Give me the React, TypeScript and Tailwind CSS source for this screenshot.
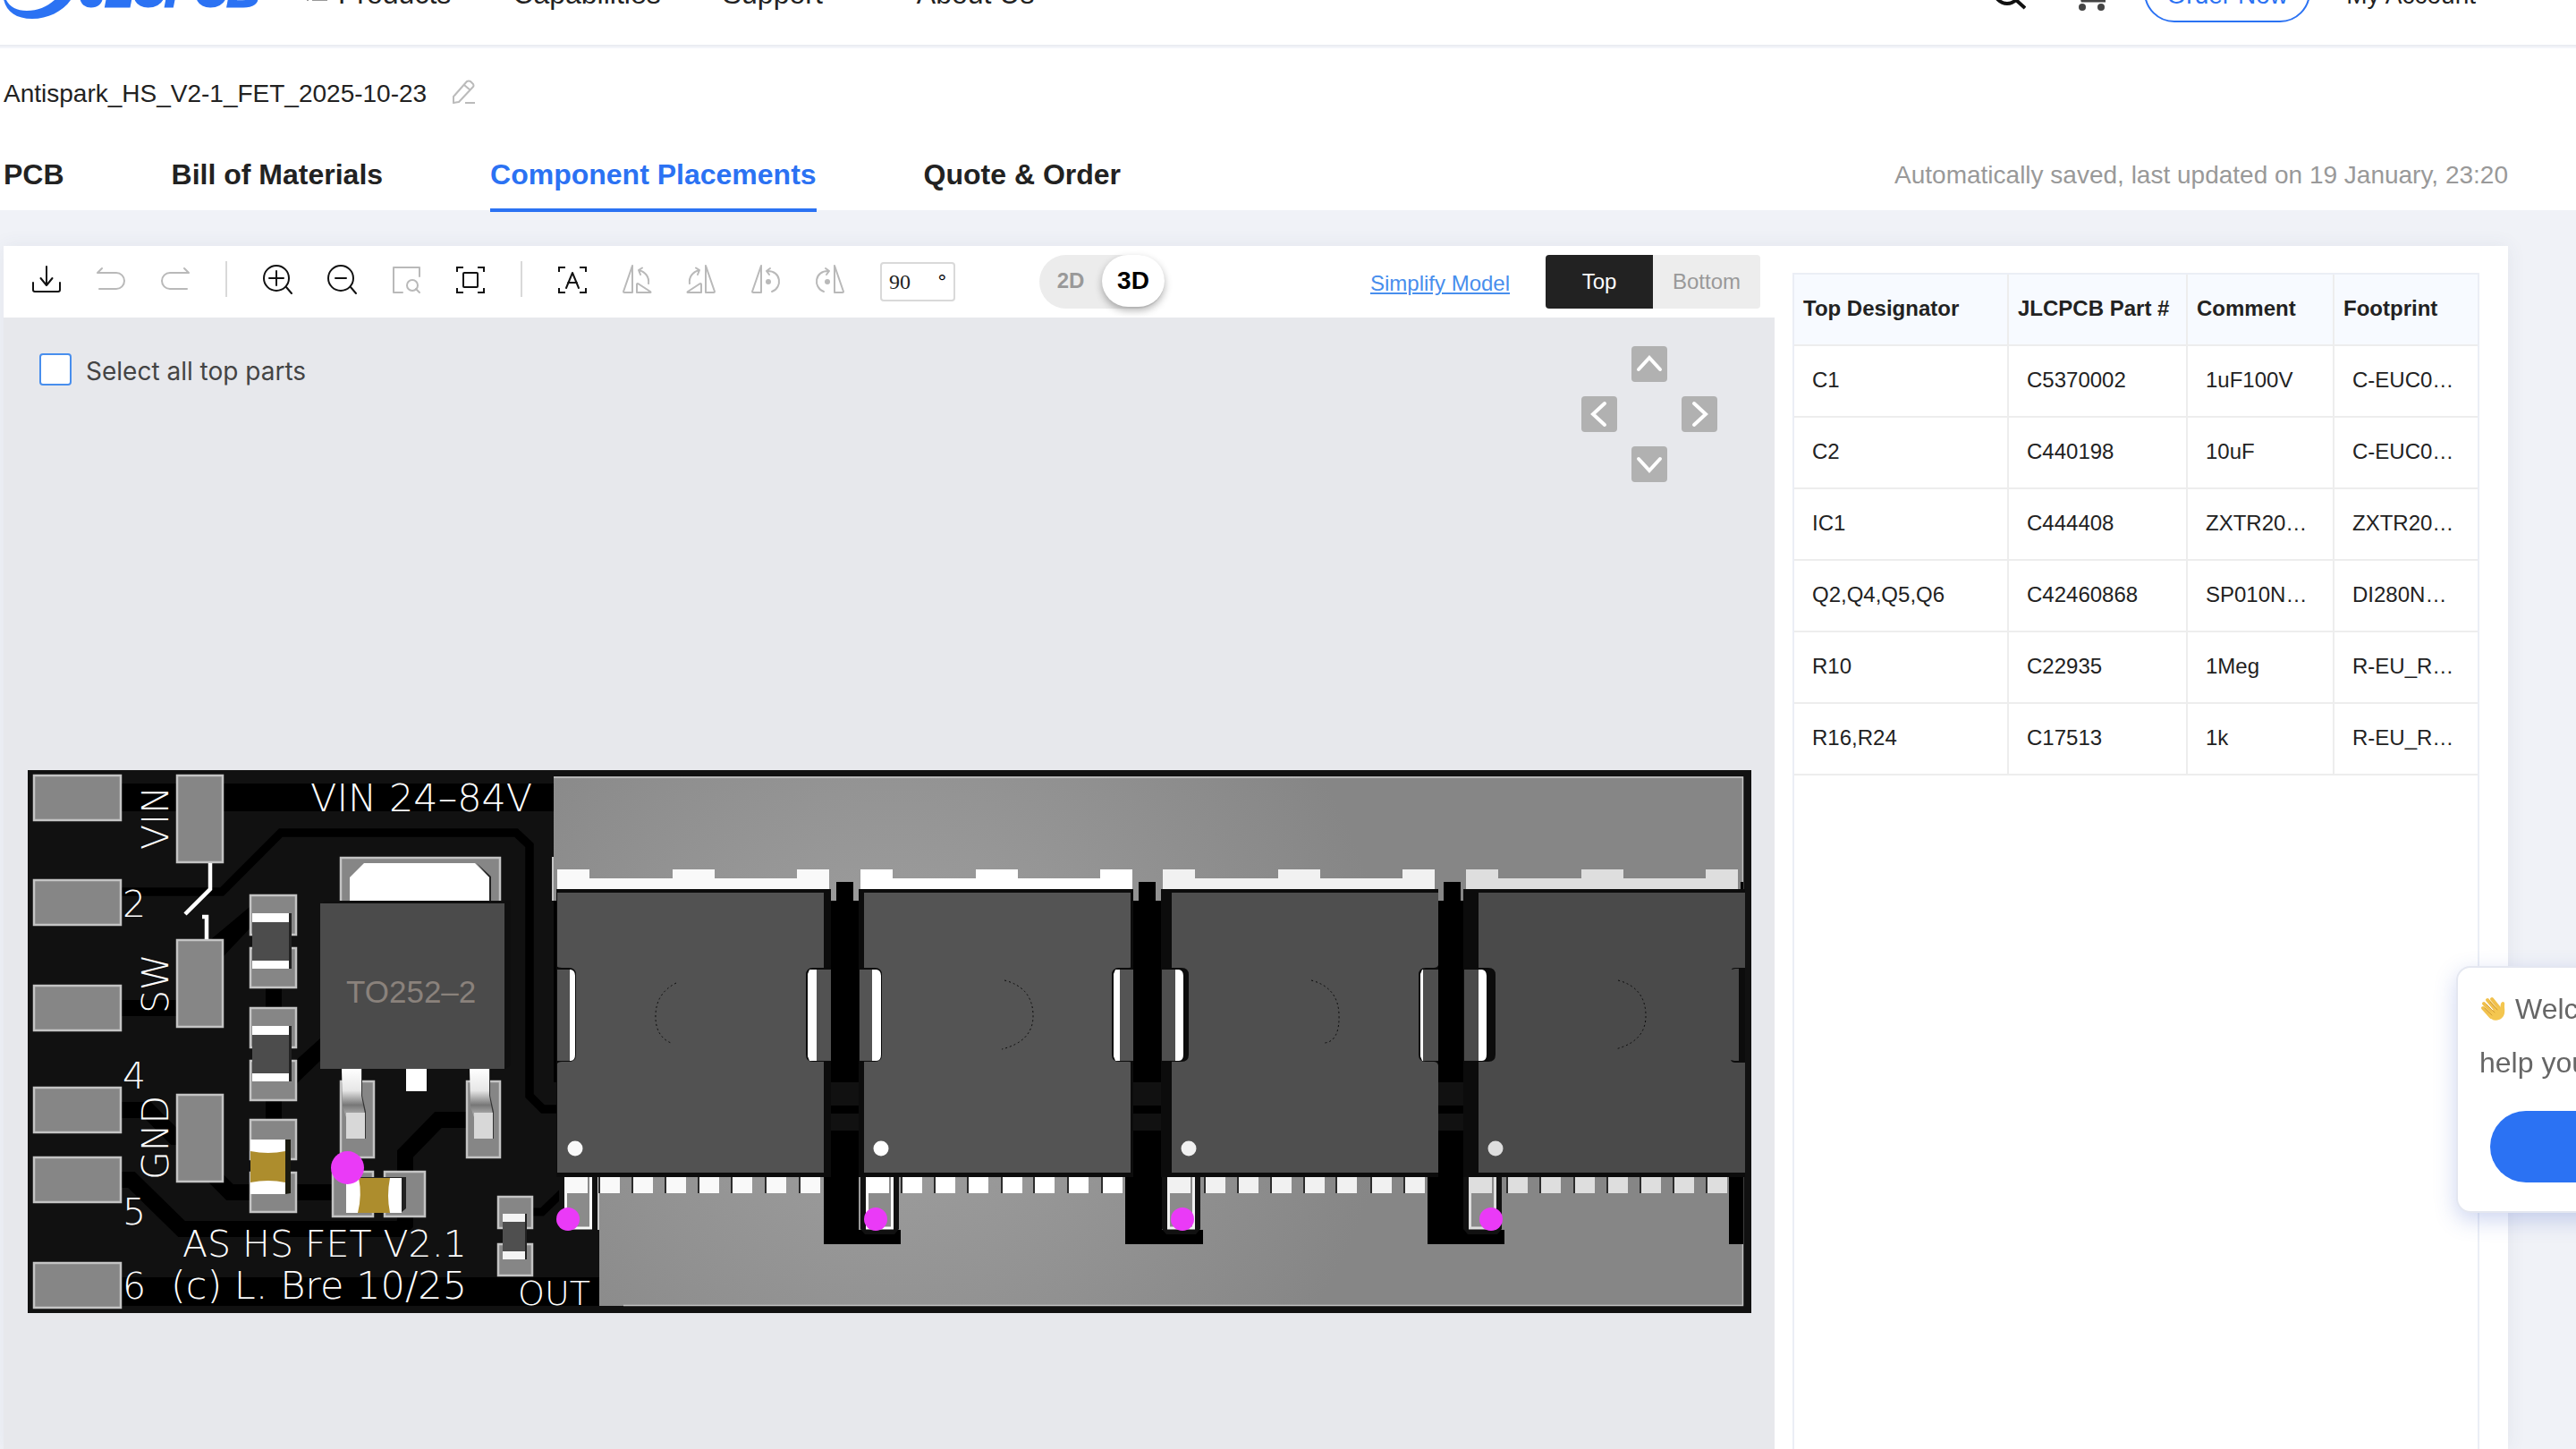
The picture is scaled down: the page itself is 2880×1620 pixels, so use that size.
import type { ReactNode } from "react";
import { useState } from "react";
import clsx from "clsx";

const TABS = ["PCB", "Bill of Materials", "Component Placements", "Quote & Order"];

const PARTS = [
    { designator: "C1", part: "C5370002", comment: "1uF100V", footprint: "C-EUC0…" },
    { designator: "C2", part: "C440198", comment: "10uF", footprint: "C-EUC0…" },
    { designator: "IC1", part: "C444408", comment: "ZXTR20…", footprint: "ZXTR20…" },
    { designator: "Q2,Q4,Q5,Q6", part: "C42460868", comment: "SP010N…", footprint: "DI280N…" },
    { designator: "R10", part: "C22935", comment: "1Meg", footprint: "R-EU_R…" },
    { designator: "R16,R24", part: "C17513", comment: "1k", footprint: "R-EU_R…" },
];

function Logo() {
    return (
        <svg viewBox="0 0 300 80" className="h-20 w-[300px] shrink-0" aria-label="JLCPCB">
            <path d="M4 48C4 20 30 2 58 6c22 4 30 22 21 43C70 62 53 70 36 70 18 70 7 62 4 48Zm3 1c4 8 12 12 23 12 12 0 22-4 31-12 9-10 12-24 2-32C40 8 8 24 7 49Z" fill="#2b72f3" fillRule="evenodd" />
            <text x="90" y="56" fontSize="50" fontWeight="700" fontStyle="italic" fill="#2b72f3" stroke="#2b72f3" strokeWidth="3">JLCPCB</text>
        </svg>
    );
}

function Header() {
    return (
        <header className="-mt-[68px] flex h-[120px] items-center justify-between border-b-2 border-[#ebedf2] bg-white pr-[112px] text-[#222]">
            <div className="flex items-center">
                <Logo />
                <svg viewBox="0 0 24 20" className="ml-[42px] h-5 w-6 shrink-0" fill="none" stroke="#999" strokeWidth="2">
                    <path d="M1 1h2M7 1h17M1 10h2M7 10h17M1 19h2M7 19h17" />
                </svg>
                <nav className="ml-3 flex gap-[69px] pt-1 text-[32px] leading-10 whitespace-nowrap">
                    <a href="#products">Products</a>
                    <a href="#capabilities">Capabilities</a>
                    <a href="#support">Support</a>
                    <a href="#about" className="ml-9">About Us</a>
                </nav>
            </div>
            <div className="flex items-center text-[28px] leading-10 whitespace-nowrap">
                <button aria-label="Search">
                    <svg viewBox="0 0 40 40" className="size-10" fill="none" stroke="#111" strokeWidth="4">
                        <circle cx="19" cy="19" r="14" />
                        <path d="m29 29 10 9" />
                    </svg>
                </button>
                <button aria-label="Cart" className="ml-[48px]">
                    <svg viewBox="0 0 44 44" className="size-11" fill="none" stroke="#444" strokeWidth="3">
                        <path d="M2 8h7l6 24h26M12 14h30l-4 14H14" />
                        <circle cx="15" cy="39" r="4" fill="#444" stroke="none" />
                        <circle cx="36" cy="39" r="4" fill="#444" stroke="none" />
                    </svg>
                </button>
                <button className="ml-10 h-[68px] w-[186px] rounded-full border-2 border-[#2b72f3] pt-2 text-[#2b72f3]">Order Now</button>
                <a href="#account" className="ml-10 pt-2">My Account</a>
            </div>
        </header>
    );
}

function ToolButton({ label, off = false, flip = false, children }: { label: string; off?: boolean; flip?: boolean; children: ReactNode }) {
    return (
        <button aria-label={label} disabled={off} className="shrink-0 pb-1.5">
            <svg
                viewBox="0 0 32 32"
                className={clsx("size-8 overflow-visible", off ? "text-[#b9b9b9]" : "text-[#111]", flip && "-scale-x-100")}
                fill="none"
                stroke="currentColor"
                strokeWidth="2"
                strokeLinecap="round"
                strokeLinejoin="round"
            >
                {children}
            </svg>
        </button>
    );
}

const Corners = () => <path d="M1 8V3h7M24 3h7v5M31 26v5h-7M8 31H1v-5" strokeLinecap="butt" strokeLinejoin="miter" />;
const UndoPath = () => <path d="M6 4 1 9h21a9 9 0 0 1 0 18H3" />;
const RotateCorner = () => (
    <>
        <path d="M11 1v30H2q-1 0-1-1ZM16 22v9h15q1 0 0-1L18 21.500q-2-1-2 .5Z" />
        <path d="M29 21c1-7-3-13-11-15M22 3.500 18 6l2 5" />
    </>
);
const RotateCenter = () => (
    <>
        <path d="M11 1v30H2q-1 0-1-1ZM17 7c17-1 18 19 6 23M21 4l-4 3 3 4" />
        <circle cx="19" cy="19" r="3" fill="currentColor" stroke="none" />
    </>
);
const Divider = () => <div className="mb-1.5 h-10 w-[2px] shrink-0 bg-[#d9d9d9]" />;

function Toolbar() {
    const [side, setSide] = useState("Top");
    return (
        <div className="flex h-20 items-center justify-between pr-4 pl-8">
            <div className="flex items-center">
                <div className="flex items-center gap-10">
                    <ToolButton label="Download">
                        <path d="M16 2v21M9.500 15l6.500 8 6.500-8M1 20v8q0 2 2 2h26q2 0 2-2v-8" />
                    </ToolButton>
                    <ToolButton label="Undo" off><UndoPath /></ToolButton>
                    <ToolButton label="Redo" off flip><UndoPath /></ToolButton>
                    <Divider />
                    <ToolButton label="Zoom in">
                        <circle cx="15" cy="15" r="14" />
                        <path d="M15 7v16M7 15h16M26 25l6 7" />
                    </ToolButton>
                    <ToolButton label="Zoom out">
                        <circle cx="15" cy="15" r="14" />
                        <path d="M9 15h12M26 25l6 7" />
                    </ToolButton>
                    <ToolButton label="Zoom to area" off>
                        <path d="M31 13V3H2v28h10M27 27l4 4" />
                        <circle cx="23" cy="23" r="6" />
                    </ToolButton>
                    <ToolButton label="Fit to screen">
                        <Corners />
                        <rect x="8" y="9" width="16" height="16" rx="1" />
                    </ToolButton>
                    <Divider />
                    <ToolButton label="Show designators">
                        <Corners />
                        <path d="m9 26 7-17 7 17M11 20h10" />
                    </ToolButton>
                    <ToolButton label="Rotate left" off><RotateCorner /></ToolButton>
                    <ToolButton label="Rotate right" off flip><RotateCorner /></ToolButton>
                    <ToolButton label="Rotate group left" off><RotateCenter /></ToolButton>
                    <ToolButton label="Rotate group right" off flip><RotateCenter /></ToolButton>
                    <label className="flex h-11 w-[84px] items-center justify-between rounded border-2 border-[#d9d9d9] pr-2 pl-2 text-2xl">
                        <input aria-label="Rotation angle" defaultValue="90" className="w-10 font-['Liberation_Serif',serif] text-[#222] outline-none" />
                        <span>°</span>
                    </label>
                </div>
                <div className="ml-[94px] flex h-[60px] w-[140px] rounded-full bg-[#ececec] font-bold">
                    <button className="h-[58px] w-[70px] text-2xl text-[#999]">2D</button>
                    <button className="h-[58px] w-[70px] rounded-full bg-white text-[28px] text-black shadow-[0_4px_8px_rgba(0,0,0,0.3)]">3D</button>
                </div>
            </div>
            <div className="flex items-center gap-10 text-2xl">
                <a href="#simplify" className="pt-1 text-[#488eed] underline">Simplify Model</a>
                <div className="flex overflow-hidden rounded">
                    {["Top", "Bottom"].map((name) => (
                        <button
                            key={name}
                            onClick={() => setSide(name)}
                            className={clsx("h-[60px] w-[120px]", side === name ? "bg-[#222] text-white" : "bg-[#ededed] text-[#999]")}
                        >
                            {name}
                        </button>
                    ))}
                </div>
            </div>
        </div>
    );
}

function PanButton({ label, d, className }: { label: string; d: string; className: string }) {
    return (
        <button aria-label={label} className={clsx("size-10 rounded bg-[#b1b1b1]", className)}>
            <svg viewBox="0 0 40 40" className="size-10" fill="none" stroke="#fff" strokeWidth="4" strokeLinecap="round">
                <path d={d} />
            </svg>
        </button>
    );
}

const Pad = ({ x, y, w, h }: { x: number; y: number; w: number; h: number }) => (
    <rect x={x + 1} y={y + 1} width={w - 2} height={h - 2} fill="#868686" stroke="#c4c4c4" strokeWidth="2.500" />
);

const Resistor = ({ y }: { y: number }) => (
    <g>
        <Pad x={279} y={y} w={53} h={46} />
        <Pad x={279} y={y + 59} w={53} h={46} />
        <rect x="282" y={y + 21} width="44" height="62" fill="#222" />
        <rect x="282" y={y + 21} width="41" height="62" fill="#fff" />
        <rect x="282" y={y + 31} width="41" height="43" fill="#4c4c4c" />
    </g>
);

const Leg = ({ x }: { x: number }) => (
    <g>
        <path d={`M${x + 20} 1195h3v30l4 18v30h-4z`} fill="#333" />
        <path d={`M${x} 1195h22v30l4 20v4h-21l-4-12z`} fill="url(#leg)" />
        <rect x={x + 5} y="1244" width="21" height="29" fill="#d8d8d8" />
    </g>
);

interface Fet {
    tab: number;
    edge: [number, number];
    face: [number, number];
    notchL: [number, number, number];
    notchR: [number, number] | null;
    dot: number;
    pad: number;
    leads: number[];
    pin: number;
    arc: string;
    metal: string;
    body: string;
}

const FETS: Fet[] = [
    { tab: 623, edge: [622, 929], face: [623, 921], notchL: [637, 643, 644], notchR: [903, 913], dot: 643, pad: 631, leads: [633, 671, 708, 745, 782, 819, 857, 895], pin: 635, arc: "M756 1099Q734 1110 733 1134T750 1166", metal: "#f9f9f9", body: "#525252" },
    { tab: 962, edge: [960, 1267], face: [966, 1264], notchL: [975, 985, 986], notchR: [1245, 1252], dot: 985, pad: 968, leads: [970, 1009, 1046, 1083, 1121, 1157, 1195, 1233], pin: 979, arc: "M1123 1096Q1154 1104 1155 1134T1120 1173", metal: "#fff", body: "#545454" },
    { tab: 1300, edge: [1298, 1608], face: [1310, 1608], notchL: [1314, 1323, 1329], notchR: [1588, 1591], dot: 1329, pad: 1305, leads: [1310, 1348, 1385, 1422, 1459, 1495, 1534, 1571], pin: 1322, arc: "M1466 1096Q1496 1104 1497 1134T1481 1166", metal: "#f1f1f1", body: "#4f4f4f" },
    { tab: 1639, edge: [1636, 1951], face: [1653, 1951], notchL: [1653, 1662, 1672], notchR: null, dot: 1672, pad: 1642, leads: [1647, 1686, 1723, 1761, 1798, 1835, 1872, 1909], pin: 1667, arc: "M1809 1096Q1839 1104 1840 1134T1806 1173", metal: "#dedede", body: "#4a4a4a" },
];

// black channels between neighbouring transistors: [left, right, lower left, lower right]
const CHANNELS = [
    [929, 960, 921, 1007],
    [1267, 1299, 1258, 1345],
    [1608, 1637, 1596, 1682],
];

function Transistor({ fet }: { fet: Fet }) {
    const { tab, edge, face, notchL, notchR, pad, metal, body } = fet;
    return (
        <g>
            <path d={`M${tab} 995v-23h36v10h93v-10h47v10h92v-10h36v23z`} fill={metal} />
            {fet.leads.map((x, i) => (
                <g key={x}>
                    {i > 0 && <rect x={x - 2} y="1316" width="24" height="18" fill="#2c2c2c" />}
                    {i > 0 && <rect x={x} y="1316" width="22" height="18" fill={metal} />}
                </g>
            ))}
            <path d={`M${pad - 6} 1316h43v58l-5 6h-33l-5-6z`} fill="#111" />
            <rect x={pad + 1.5} y="1310" width="28" height="63" fill="#8b8b8b" stroke={metal} strokeWidth="3" />
            <rect x={pad + 2} y="1316" width="24" height="18" fill={metal} />
            <rect x={edge[0]} y="994" width={edge[1] - edge[0]} height="322" fill="#0c0c0c" />
            <rect x={face[0]} y="998" width={face[1] - face[0]} height="313" fill={body} />
            <path d={`M${edge[0]} 1080q2 2 6 2H${notchL[2] - 8}q8 0 8 8v89q0 8-8 8H${edge[0] + 6}q-4 0-6 3z`} fill="#0c0c0c" />
            <path d={`M${edge[0] + 1} 1084H${notchL[1] - 5}q5 1 5 7v88q0 7-5 7H${edge[0] + 1}z`} fill="#fff" />
            <rect x={edge[0] + 1} y="1084" width={notchL[0] - edge[0] - 1} height="102" fill={body} />
            {notchR ? (
                <>
                    <path d={`M${edge[1]} 1079q-1 3-5 3H${notchR[0] + 6}q-8 0-8 8v89q0 8 8 8H${edge[1] - 5}q4 0 5 4z`} fill="#0c0c0c" />
                    <path d={`M${notchR[1]} 1084v102H${notchR[0] + 2}l-2-5v-92l2-5z`} fill="#fff" />
                    <rect x={notchR[1]} y="1084" width={edge[1] - notchR[1]} height="102" fill={body} />
                </>
            ) : (
                <path d="M1936 1084q0-2 4-2h11v106h-11q-4 0-5-3l4 1h5v-103h-4z" fill="#0c0c0c" />
            )}
            <path d={fet.arc} fill="none" stroke="#0a0a0a" strokeWidth="1" strokeDasharray="2 3" />
            <circle cx={fet.dot} cy="1284" r="8.500" fill={metal} />
            <circle cx={fet.pin} cy="1363" r="13" fill="#ea3af7" />
        </g>
    );
}

// Coordinates are in scene units, the board sits at 31,861
function Board() {
    return (
        <svg viewBox="31 861 1927 607" className="block h-auto w-full" role="img" aria-label="Top side of the board">
            <defs>
                <radialGradient id="copper" gradientUnits="userSpaceOnUse" cx="1000" cy="1160" r="560">
                    <stop offset="0" stopColor="#a2a2a2" />
                    <stop offset="1" stopColor="#868686" />
                </radialGradient>
                <linearGradient id="leg" x1="0" y1="0" x2="0" y2="1">
                    <stop offset="0" stopColor="#fff" />
                    <stop offset="0.450" stopColor="#e6e6e6" />
                    <stop offset="0.750" stopColor="#777" />
                    <stop offset="1" stopColor="#bbb" />
                </linearGradient>
            </defs>
            <rect x="31" y="861" width="1927" height="607" fill="#111" />
            <rect x="619" y="868" width="1330" height="592" fill="url(#copper)" />
            <path d="M619 869H1948.500V1459.500H697" fill="none" stroke="#c4c4c4" strokeWidth="1.500" />
            <path d="M619 1007h51v421h-51z" fill="#111" />

            {/* traces */}
            <g fill="none" stroke="#000">
                <path d="M133 891.500H619" strokeWidth="31" />
                <path d="M133 1444H670" strokeWidth="32" />
                <path d="M136 997H248L314 931H577L592 945V1225L607 1240H624" strokeWidth="9.500" />
                <path d="M136 1127H197M136 1241H165L195 1271H202M240 1316L257 1333H371" strokeWidth="18" />
                <path d="M136 1319H147L203 1374H447L453 1368V1290L490 1252H525M306 1100V1255" strokeWidth="18" />
                <path d="M596 1355H606L634 1328" strokeWidth="9" />
                <path d="M620.500 1007V1210" strokeWidth="3" />
            </g>
            <path d="M236 1050 279 1014h4v20l-33 35zM329 1187l29-26v25l-28 27z" />
            <path d="M618 958V1007" stroke="#c4c4c4" strokeWidth="2" />

            {/* edge pads */}
            {[866, 983, 1101, 1215, 1293, 1411].map((y) => <Pad key={y} x={37} y={y} w={99} h={52} />)}
            {[866, 1050, 1223].map((y) => <Pad key={y} x={197} y={y} w={53} h={99} />)}
            <path d="M235 965V994L207 1022M226 1025H231V1050" fill="none" stroke="#fff" strokeWidth="4.500" />

            <Resistor y={1000} />
            <Resistor y={1126} />

            {/* C1 */}
            <Pad x={279} y={1251} w={53} h={46} />
            <Pad x={279} y={1310} w={53} h={46} />
            <path d="M319 1274h6v60l-6 1z" fill="#1a1a10" />
            <path d="M280 1274h39v61h-39z" fill="#fff" />
            <path d="M280 1287q20 4 39 0v35q-19-4-39 0z" fill="#ad8d2d" />

            {/* C2 */}
            <Pad x={371} y={1309} w={47} h={52} />
            <Pad x={429} y={1309} w={47} h={52} />
            <path d="M400 1316h54v35l-6 5h-48z" fill="#222" />
            <path d="M387 1317h62v39h-62z" fill="#fff" />
            <path d="M401 1317h35q-4 20 0 39h-36q5-20 1-39z" fill="#ad8d2d" />

            {/* IC1 */}
            <Pad x={380} y={958} w={180} h={60} />
            <path d="M547 981v27h2v-28l-16-15z" fill="#222" />
            <path d="M391 1010v-29l16-16h124l16 16v29z" fill="#fff" />
            <path d="M362 1007h209v184l-7 4H358z" fill="#0f0f0f" />
            <rect x="358" y="1010" width="206" height="185" fill="#4b4b4b" />
            <text x="387" y="1121" fontSize="35" fill="#8a827c">TO252–2</text>
            <Pad x={380} y={1208} w={39} h={87} />
            <Pad x={521} y={1208} w={39} h={87} />
            <rect x="454" y="1195" width="23" height="25" fill="#fff" />
            <Leg x={382} />
            <Leg x={525} />
            <circle cx="388.500" cy="1305.500" r="18.500" fill="#ea3af7" />

            {/* R10 */}
            <Pad x={556} y={1337} w={40} h={37} />
            <Pad x={556} y={1390} w={40} h={37} />
            <rect x="562" y="1357" width="27" height="51" fill="#222" />
            <rect x="562" y="1357" width="25" height="51" fill="#f4f4f4" />
            <rect x="562" y="1366" width="25" height="33" fill="#4f4f4f" />

            {CHANNELS.map(([left, right, lowLeft, lowRight]) => (
                <g key={left}>
                    <path d={`M${left} 1007h6v-21h19v21H${right}V1375H${lowRight}V1391H${lowLeft}V1316H${left}z`} />
                    <path d={`M${left} 1210H${right}v26H${left}zM${left} 1245H${right}v19H${left}z`} fill="#111" />
                </g>
            ))}
            <path d="M1933 1316h16v75h-16zM1946 986h3v10h-3z" />
            <path d="M669 1316V1375" stroke="#ccc" strokeWidth="2" />
            {FETS.map((fet) => <Transistor key={fet.tab} fet={fet} />)}

            {/* silkscreen */}
            <g fill="#fff" fontSize="41" fontWeight="200" fontFamily="'DejaVu Sans', sans-serif">
                <text x="347" y="907" fontSize="43">VIN 24–84V</text>
                <text x="204" y="1405">AS HS FET V2.1</text>
                <text x="191" y="1452" fontSize="43">(c) L. Bre 10/25</text>
                <text x="579" y="1459" fontSize="38">OUT</text>
                <text x="137" y="1025">2</text>
                <text x="137" y="1217">4</text>
                <text x="137" y="1369">5</text>
                <text x="137" y="1452">6</text>
                <text transform="translate(188 950) rotate(-90)">VIN</text>
                <text transform="translate(188 1133) rotate(-90)">SW</text>
                <text transform="translate(188 1319) rotate(-90)">GND</text>
            </g>
        </svg>
    );
}

function PartsTable() {
    return (
        <div className="mt-[30px] mr-8 ml-5 flex-1 border-2 border-b-0 border-[#ebeef5]">
            <table className="w-full table-fixed text-left text-2xl text-[#222]">
                <colgroup>
                    <col className="w-[239px]" />
                    <col className="w-[200px]" />
                    <col className="w-[164px]" />
                    <col />
                </colgroup>
                <thead>
                    <tr className="h-[79px] border-b-2 border-[#ededed] bg-[#f7faff]">
                        {["Top Designator", "JLCPCB Part #", "Comment", "Footprint"].map((title) => (
                            <th key={title} className="border-r-2 border-[#ededed] px-[10px] pb-[2px] whitespace-nowrap last:border-r-0">{title}</th>
                        ))}
                    </tr>
                </thead>
                <tbody>
                    {PARTS.map((row) => (
                        <tr key={row.designator} className="h-20 border-b-2 border-[#ededed]">
                            {[row.designator, row.part, row.comment, row.footprint].map((cell, idx) => (
                                <td key={idx} className="border-r-2 border-[#ededed] pb-[2px] pl-5 whitespace-nowrap last:border-r-0">{cell}</td>
                            ))}
                        </tr>
                    ))}
                </tbody>
            </table>
        </div>
    );
}

function ChatBubble() {
    return (
        <div className="fixed top-[1080px] -right-[266px] w-[400px] rounded-2xl border-2 border-[#e4e7f0] bg-white pt-4 pb-8 shadow-[0_8px_24px_rgba(60,90,200,0.25)]">
            <div className="pl-6 text-[32px] leading-[60px] whitespace-nowrap text-[#666]">
                <p className="flex items-center gap-[10px]">
                    <svg viewBox="0 0 30 30" className="size-[30px]" aria-label="Waving hand">
                        <path d="M4 14 13 24M5 9l10 11M9 5l10 12M14 4l8 10" stroke="#f0c04c" strokeWidth="4" strokeLinecap="round" />
                        <path d="M20 12 23 15c1-3 0-7 3-8 3 0 2 3 2 6 1 8-1 12-6 14-5 2-9 0-13-5z" fill="#f4c64f" />
                        <path d="M6 14l8 8M8 10l9 9M12 7l8 9" stroke="#c98f2c" strokeWidth="0.800" strokeLinecap="round" />
                    </svg>
                    Welcome
                </p>
                <p>help you</p>
            </div>
            <button aria-label="Chat now" className="mt-6 ml-9 block h-20 w-[320px] rounded-full bg-[#2b72f3]" />
        </div>
    );
}

export default function App() {
    return (
        <div className="flex min-h-screen flex-col overflow-hidden bg-[#f0f2f7] font-['Liberation_Sans',Arial,sans-serif]">
            <Header />
            <section className="border-t-2 border-[#f3f5fa] bg-white pr-[76px] pl-1 text-[#222]">
                <div className="flex h-[102px] items-center gap-7 text-[28px]">
                    <h1>Antispark_HS_V2-1_FET_2025-10-23</h1>
                    <button aria-label="Rename" className="pb-1">
                        <svg viewBox="0 0 28 28" className="size-7" fill="none" stroke="#bbb" strokeWidth="2" strokeLinejoin="round">
                            <path d="M2 26V19L17 2q2-1 4 0l3 3q1 2 0 3L8 25zM14 6l7 6M15 26h11" />
                        </svg>
                    </button>
                </div>
                <div className="flex h-[79px] items-start justify-between">
                    <div className="flex gap-[120px] text-[32px] font-bold whitespace-nowrap">
                        {TABS.map((tab) => (
                            <button
                                key={tab}
                                className={clsx(
                                    "relative h-[81px] border-b-4",
                                    tab === "Component Placements" ? "border-[#2b72f3] text-[#2b72f3]" : "border-transparent"
                                )}
                            >
                                {tab}
                            </button>
                        ))}
                    </div>
                    <p className="self-center text-[28px] text-[#999]">Automatically saved, last updated on 19 January, 23:20</p>
                </div>
            </section>

            <main className="mt-10 mr-[76px] ml-1 flex flex-1 bg-white shadow-[0_0_20px_rgba(60,80,120,0.08)]">
                <div className="flex min-w-0 flex-1 flex-col">
                    <Toolbar />
                    <div className="flex-1 bg-[#e7e8ec] pr-[26px] pl-[27px]">
                        <div className="flex items-start justify-between pt-8 pr-[38px] pl-[13px]">
                            <label className="mt-2 flex items-center gap-4 font-['Inter',sans-serif] text-[28px] leading-9 text-[#444]">
                                <input type="checkbox" className="size-9 appearance-none rounded border-2 border-[#488eed] bg-white" />
                                <span className="-mb-1">Select all top parts</span>
                            </label>
                            <div className="grid grid-cols-3 gap-4">
                                <PanButton label="Pan up" d="m8 26 12-13 12 13" className="col-start-2" />
                                <PanButton label="Pan left" d="M26 8 13 20l13 12" className="col-start-1 row-start-2" />
                                <PanButton label="Pan right" d="m14 8 13 12-13 12" className="col-start-3 row-start-2" />
                                <PanButton label="Pan down" d="m8 14 12 13 12-13" className="col-start-2 row-start-3" />
                            </div>
                        </div>
                        <div className="mt-[322px]">
                            <Board />
                        </div>
                    </div>
                </div>
                <aside className="flex w-[820px] shrink-0 flex-col">
                    <PartsTable />
                </aside>
            </main>
            <ChatBubble />
        </div>
    );
}
